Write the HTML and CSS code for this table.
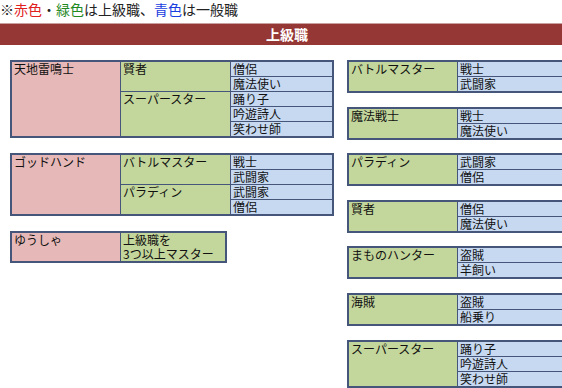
FILE: index.html
```html
<!DOCTYPE html>
<html lang="ja">
<head>
<meta charset="utf-8">
<link rel="stylesheet" href="styles.css">
</head>
<body>
<p class="note">※<span class="red">赤色</span>・<span class="green">緑色</span>は上級職、<span class="blue">青色</span>は一般職</p>
<h2 class="bar">上級職</h2>
<div class="cols">
  <div class="col left">
    <table class="tbl">
      <tr><td class="p w1" rowspan="5">天地雷鳴士</td><td class="g w2" rowspan="2">賢者</td><td class="b">僧侶</td></tr>
      <tr><td class="b">魔法使い</td></tr>
      <tr><td class="g" rowspan="3">スーパースター</td><td class="b">踊り子</td></tr>
      <tr><td class="b">吟遊詩人</td></tr>
      <tr><td class="b">笑わせ師</td></tr>
    </table>
    <table class="tbl">
      <tr><td class="p w1" rowspan="4">ゴッドハンド</td><td class="g w2" rowspan="2">バトルマスター</td><td class="b">戦士</td></tr>
      <tr><td class="b">武闘家</td></tr>
      <tr><td class="g" rowspan="2">パラディン</td><td class="b">武闘家</td></tr>
      <tr><td class="b">僧侶</td></tr>
    </table>
    <table class="tbl short">
      <tr><td class="p w1">ゆうしゃ</td><td class="g">上級職を<br>3つ以上マスター</td></tr>
    </table>
  </div>
  <div class="col right">
    <table class="tbl rt">
      <tr><td class="g w1" rowspan="2">バトルマスター</td><td class="b">戦士</td></tr>
      <tr><td class="b">武闘家</td></tr>
    </table>
    <table class="tbl rt">
      <tr><td class="g w1" rowspan="2">魔法戦士</td><td class="b">戦士</td></tr>
      <tr><td class="b">魔法使い</td></tr>
    </table>
    <table class="tbl rt">
      <tr><td class="g w1" rowspan="2">パラディン</td><td class="b">武闘家</td></tr>
      <tr><td class="b">僧侶</td></tr>
    </table>
    <table class="tbl rt">
      <tr><td class="g w1" rowspan="2">賢者</td><td class="b">僧侶</td></tr>
      <tr><td class="b">魔法使い</td></tr>
    </table>
    <table class="tbl rt">
      <tr><td class="g w1" rowspan="2">まものハンター</td><td class="b">盗賊</td></tr>
      <tr><td class="b">羊飼い</td></tr>
    </table>
    <table class="tbl rt">
      <tr><td class="g w1" rowspan="2">海賊</td><td class="b">盗賊</td></tr>
      <tr><td class="b">船乗り</td></tr>
    </table>
    <table class="tbl rt">
      <tr><td class="g w1" rowspan="3">スーパースター</td><td class="b">踊り子</td></tr>
      <tr><td class="b">吟遊詩人</td></tr>
      <tr><td class="b">笑わせ師</td></tr>
    </table>
  </div>
</div>
</body>
</html>
```
FILE: styles.css
```css
html, body {
  margin: 0;
  padding: 0;
  overflow: hidden;
  background: #ffffff;
}
body {
  font-family: "Noto Sans CJK JP", "Noto Sans", sans-serif;
  color: #111;
  width: 562px;
}
.note {
  margin: 0;
  height: 21px;
  font-size: 14px;
  line-height: 18px;
  color: #222;
  white-space: nowrap;
}
.red { color: #e0201c; }
.green { color: #1f8a1f; }
.blue { color: #1a3fe0; }
.bar {
  margin: 2px 0 0;
  height: 22px;
  background: #953735;
  border-top: 1px solid #c9a0a0;
  color: #ffffff;
  font-size: 14px;
  font-weight: bold;
  line-height: 21px;
  text-align: center;
  padding-left: 12px;
  box-sizing: border-box;
}
.cols {
  display: flex;
  gap: 13px;
  padding: 15px 0 0 10px;
  width: 700px;
}
.col {
  display: flex;
  flex-direction: column;
  gap: 15px;
}
.col.right { gap: 13.6px; }
.left { width: 324px; }
.right { width: 330px; }
.tbl {
  border-collapse: collapse;
  border: 2px solid #46557a;
  font-size: 12px;
  table-layout: fixed;
}
.left .tbl { width: 324px; }
.left .tbl.short { width: 217px; }
.rt { width: 330px; }
.tbl td {
  border: 1px solid #46557a;
  padding: 0 2px;
  line-height: 14px;
  height: 14px;
  vertical-align: top;
  white-space: nowrap;
  overflow: hidden;
}
.w1 { width: 104px; }
.w2 { width: 105px; }
.p { background: #e6b9b8; }
.g { background: #c3d69b; }
.b { background: #c6d9f1; }
```
